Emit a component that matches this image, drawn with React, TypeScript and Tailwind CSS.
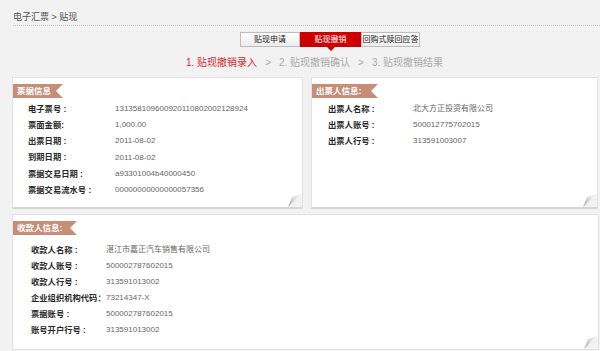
import React from "react";

const FONT = { fontFamily: '"Liberation Sans", "Noto Sans CJK SC", sans-serif' };

function Fold() {
  return (
    <svg className="absolute right-0 bottom-0" width="14" height="14" viewBox="0 0 14 14">
      <defs>
        <linearGradient id="fg" x1="0" y1="1" x2="1" y2="0">
          <stop offset="0" stopColor="#a0a0a0" />
          <stop offset="0.5" stopColor="#dadada" />
          <stop offset="1" stopColor="#ffffff" />
        </linearGradient>
      </defs>
      <polygon points="14,0 14,14 0,14" fill="#f2f2f2" />
      <polygon points="0,14 14,0 4,4" fill="url(#fg)" />
    </svg>
  );
}

function Tag({ text, w }: { text: string; w: string }) {
  return (
    <div
      className={`h-[14px] ${w} bg-[#c68d77] text-white font-bold text-[8.5px] leading-[14px] pl-[4px] [clip-path:polygon(0_0,100%_0,calc(100%-7px)_50%,100%_100%,0_100%)]`}
    >
      {text}
    </div>
  );
}

function Rows({ rows, lw, h }: { rows: [string, string][]; lw: string; h: string }) {
  return (
    <div className="flex flex-col">
      {rows.map(([l, v]) => (
        <div key={l} className={`flex ${h} items-center`}>
          <div className={`${lw} shrink-0 text-[8.3px] font-bold text-[#2a2a2a] whitespace-nowrap`}>{l}</div>
          <div className="text-[8px] text-[#666] whitespace-nowrap">{v}</div>
        </div>
      ))}
    </div>
  );
}

export default function App() {
  return (
    <div className="w-[600px] h-[351px] bg-[#f2f2f2] overflow-hidden" style={FONT}>
      <div className="ml-[13px] pt-[9px] h-[26px] border-b border-dotted border-[#c4c4c4] text-[9px] leading-[16px] text-[#555]">
        电子汇票 &gt; 贴现
      </div>
      <div className="flex pl-[240px] mt-[6px] h-[15px] text-[8px] text-[#222]">
        <div className="w-[60px] border border-[#bdbdbd] bg-gradient-to-b from-white to-[#ececec] flex items-center justify-center">
          贴现申请
        </div>
        <div className="relative w-[61px] bg-[#cc0000] text-white flex items-center justify-center">
          贴现撤销
          <div className="absolute left-1/2 -translate-x-1/2 top-full w-0 h-0 border-l-[4px] border-r-[4px] border-t-[4px] border-l-transparent border-r-transparent border-t-[#cc0000]" />
        </div>
        <div className="w-[59px] border border-[#bdbdbd] bg-gradient-to-b from-white to-[#ececec] flex items-center justify-center whitespace-nowrap">
          回购式赎回应答
        </div>
      </div>
      <div className="pl-[186px] mt-[8px] h-[16px] leading-[16px] text-[10px] text-[#aaa] whitespace-nowrap">
        <span className="text-[#d62a2a]">1. 贴现撤销录入</span>
        <span className="mx-[8px]">&gt;</span>
        <span>2. 贴现撤销确认</span>
        <span className="mx-[8px]">&gt;</span>
        <span>3. 贴现撤销结果</span>
      </div>
      <div className="flex gap-[8px] pl-[12px] mt-[6px]">
        <div className="relative w-[291px] h-[132px] bg-white border border-[#e2e2e2] border-b-[2px] border-b-[#d6d6d6] pt-[6px]">
          <Tag text="票据信息" w="w-[50px]" />
          <div className="pl-[15px] mt-[3px]">
            <Rows
              lw="w-[87px]"
              h="h-[16.2px]"
              rows={[
                ["电子票号 :", "131358109600920110802002128924"],
                ["票面金额:", "1,000.00"],
                ["出票日期 :", "2011-08-02"],
                ["到期日期 :", "2011-08-02"],
                ["票据交易日期 :", "a93301004b40000450"],
                ["票据交易流水号 :", "00000000000000057356"],
              ]}
            />
          </div>
          <Fold />
        </div>
        <div className="relative w-[287px] h-[132px] bg-white border border-[#e2e2e2] border-b-[2px] border-b-[#d6d6d6] pt-[6px]">
          <Tag text="出票人信息:" w="w-[66px]" />
          <div className="pl-[16px] mt-[3px]">
            <Rows
              lw="w-[85px]"
              h="h-[16.2px]"
              rows={[
                ["出票人名称 :", "北大方正投资有限公司"],
                ["出票人账号 :", "500012775702015"],
                ["出票人行号 :", "313591003007"],
              ]}
            />
          </div>
          <Fold />
        </div>
      </div>
      <div className="relative ml-[12px] mt-[5px] w-[587px] h-[136px] bg-white border border-[#e2e2e2] pt-[6px]">
        <Tag text="收款人信息:" w="w-[64px]" />
        <div className="pl-[18px] mt-[7px]">
          <Rows
            lw="w-[75px]"
            h="h-[16px]"
            rows={[
              ["收款人名称 :", "湛江市嘉正汽车销售有限公司"],
              ["收款人账号 :", "500002787602015"],
              ["收款人行号 :", "313591013002"],
              ["企业组织机构代码：", "73214347-X"],
              ["票据账号 :", "500002787602015"],
              ["账号开户行号 :", "313591013002"],
            ]}
          />
        </div>
        <Fold />
      </div>
    </div>
  );
}
